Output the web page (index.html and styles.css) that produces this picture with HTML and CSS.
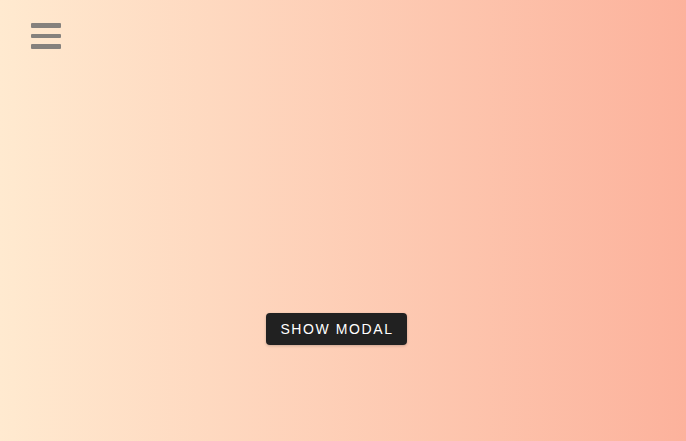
FILE: index.html
```html
<!DOCTYPE html>
<html>
<head>
<meta charset="utf-8">
<link rel="stylesheet" href="styles.css">
</head>
<body>
<div class="page">
  <header class="topbar">
    <button class="menu" aria-label="menu">
      <span class="bar"></span><span class="bar"></span><span class="bar"></span>
    </button>
  </header>
  <main class="content">
    <button class="show-modal">Show modal</button>
  </main>
</div>
</body>
</html>
```
FILE: styles.css
```css
html, body {
  margin: 0;
  padding: 0;
  height: 100%;
}
body {
  font-family: "Liberation Sans", Arial, sans-serif;
}
.page {
  height: 441px;
  background: linear-gradient(to right, #ffead0 0%, #fcb29c 100%);
  display: flex;
  flex-direction: column;
}
.topbar {
  padding: 23px 0 0 31px;
}
.menu {
  display: flex;
  flex-direction: column;
  gap: 6px;
  padding: 0;
  border: 0;
  background: none;
  width: 30px;
}
.bar {
  display: block;
  width: 30px;
  height: 4.5px;
  background: #85817d;
  border-radius: 1px;
}
.content {
  padding: 264px 0 0 266px;
}
.show-modal {
  width: 141px;
  height: 32px;
  background: #212121;
  color: #fff;
  border: 0;
  border-radius: 4px;
  font-family: "Liberation Sans", Arial, sans-serif;
  font-size: 14px;
  font-weight: 400;
  letter-spacing: 1.6px;
  text-transform: uppercase;
  box-shadow: 0 1px 3px rgba(0,0,0,0.2);
  padding: 0 0 0 1px;
}
```
